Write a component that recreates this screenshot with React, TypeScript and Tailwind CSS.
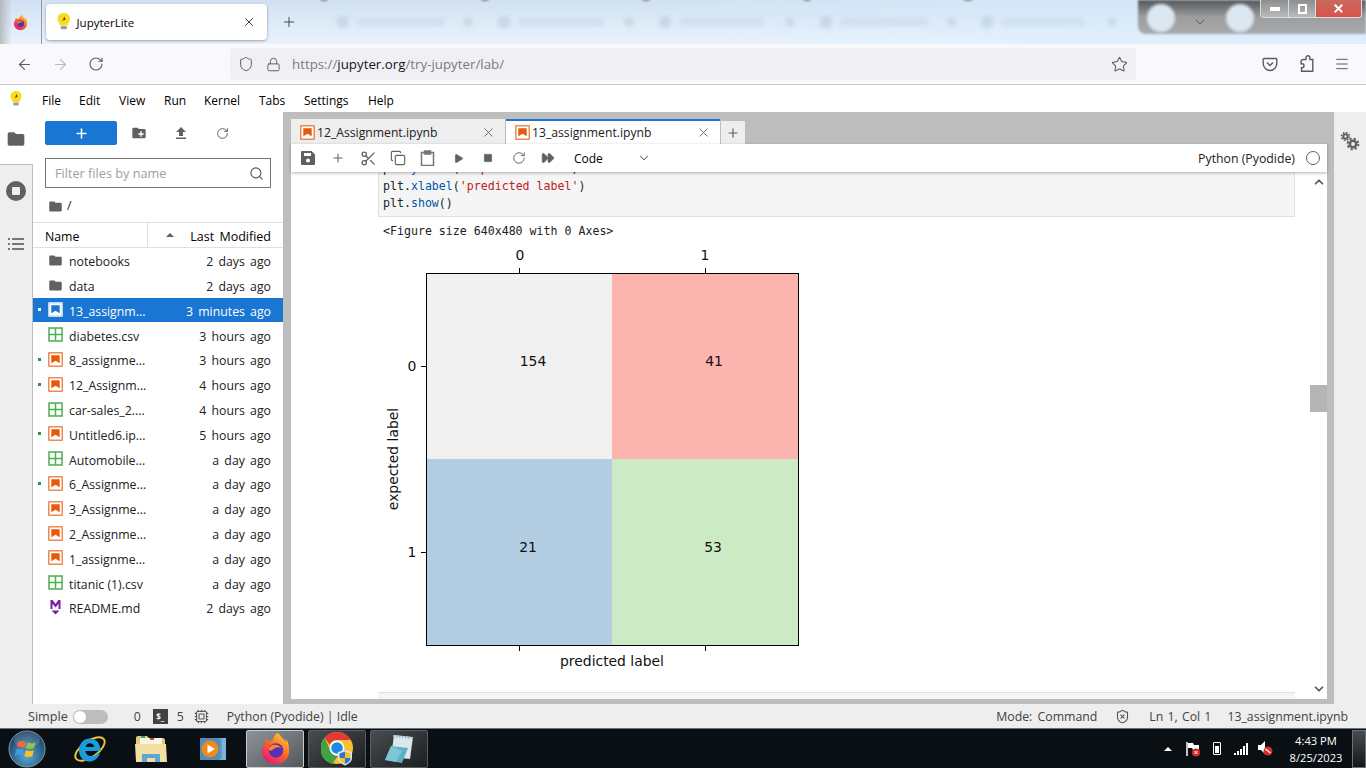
import type { ReactNode } from "react";
import { ChevronDown, ChevronUp, Copy, FastForward, Menu, Play, Plus, RotateCw, Scissors, Search, Square, Star, X, ArrowLeft, ArrowRight, Lock, Shield, Cpu, ShieldX } from "lucide-react";

const UI = "font-['Open_Sans','Noto_Sans',sans-serif]";

type FileRow = { name: string; when: string; kind: "folder" | "nb" | "csv" | "md"; running?: boolean; selected?: boolean };

const files: FileRow[] = [
  { name: "notebooks", when: "2 days ago", kind: "folder" },
  { name: "data", when: "2 days ago", kind: "folder" },
  { name: "13_assignm...", when: "3 minutes ago", kind: "nb", running: true, selected: true },
  { name: "diabetes.csv", when: "3 hours ago", kind: "csv" },
  { name: "8_assignme...", when: "3 hours ago", kind: "nb", running: true },
  { name: "12_Assignm...", when: "4 hours ago", kind: "nb", running: true },
  { name: "car-sales_2....", when: "4 hours ago", kind: "csv" },
  { name: "Untitled6.ip...", when: "5 hours ago", kind: "nb", running: true },
  { name: "Automobile...", when: "a day ago", kind: "csv" },
  { name: "6_Assignme...", when: "a day ago", kind: "nb", running: true },
  { name: "3_Assignme...", when: "a day ago", kind: "nb" },
  { name: "2_Assignme...", when: "a day ago", kind: "nb" },
  { name: "1_assignme...", when: "a day ago", kind: "nb" },
  { name: "titanic (1).csv", when: "a day ago", kind: "csv" },
  { name: "README.md", when: "2 days ago", kind: "md" },
];

function FolderIcon({ size = 16, color = "#616161" }: { size?: number; color?: string }) {
  return (
    <svg width={size} height={size} viewBox="0 0 24 24" fill={color}>
      <path d="M10 4H4c-1.100 0-2 .9-2 2v12c0 1.100.9 2 2 2h16c1.100 0 2-.9 2-2V8c0-1.100-.9-2-2-2h-8l-2-2z" />
    </svg>
  );
}

function NotebookIcon({ color = "#e8590c", selected }: { color?: string; selected?: boolean }) {
  return (
    <svg width="15" height="15" viewBox="0 0 15 15" className="shrink-0">
      <rect x="0.750" y="0.750" width="13.500" height="13.500" rx="0.500" fill="white" stroke={selected ? "#bcd8f4" : color} strokeOpacity={selected ? 1 : 0.7} strokeWidth="1.500" />
      <path d="M3.300 3.300h8.400v8l-4.200-2.600-4.200 2.600z" fill={color} />
    </svg>
  );
}

function CsvIcon() {
  return (
    <svg width="15" height="15" viewBox="0 0 15 15" className="shrink-0" fill="none" stroke="#4caf50" strokeWidth="1.500">
      <rect x="1" y="1" width="13" height="13" />
      <path d="M7.500 1v13M1 7.500h13" />
    </svg>
  );
}

function MarkdownIcon() {
  return (
    <svg width="15" height="16" viewBox="0 0 15 16" className="shrink-0" fill="#7b1fa2">
      <path d="M2.500 0h2.200l2.800 4 2.800-4h2.200v9h-2V3.700L7.500 7.500 4.500 3.700V9h-2z" />
      <path d="M3.500 10.500h8L7.500 14.500z" />
    </svg>
  );
}

function Bulb({ size = 16 }: { size?: number }) {
  return (
    <svg width={size * 0.75} height={size} viewBox="0 0 12 16">
      <path d="M6 0C2.700 0 .5 2.300.5 5.200c0 2.400 1.700 3.500 2.300 6h6.400c.6-2.500 2.300-3.600 2.300-6C11.500 2.300 9.300 0 6 0z" fill="#f5dc1e" />
      <rect x="3.200" y="11.500" width="5.600" height="3" rx="1" fill="#9e9e9e" />
      <path d="M4.500 8l2-5 1 3-2 .5z" fill="#4a3d10" />
    </svg>
  );
}

function FirefoxLogo({ size = 18, id }: { size?: number; id: string }) {
  return (
    <svg width={size} height={size} viewBox="0 0 32 32">
      <defs>
        <linearGradient id={id} x1="0.800" y1="0.100" x2="0.200" y2="1">
          <stop offset="0" stopColor="#ffc229" />
          <stop offset="0.500" stopColor="#ff5a2b" />
          <stop offset="1" stopColor="#e31587" />
        </linearGradient>
      </defs>
      <path d="M29 10c-.7-1.700-2.300-3.600-3.500-4.200 1 2 1.500 3.500 1.700 4.800C25 6 21.500 4 18.500 0c-.2 0-.3 0-.4.100-3.800 2.200-4.800 5.800-4.900 7.400-1.500.1-3 .7-4 1.700-.9-.7-1-1.300-1.500-3.400-1.400 1-2.500 3-3 5C3 14 2 17 2 19c0 7 6 13 14 13s14-6 14-13c0-3-.2-6-1-9z" fill={`url(#${id})`} />
      <circle cx="16.500" cy="18" r="7.500" fill="#5b2fb5" />
      <path d="M9 17c1-3 3-5 6-5 4 0 6 2 7 4-1.500-1-3-1.500-5-1-2.500.5-3 2-5 3-1.500.5-2.500 0-3-1z" fill="#ff8a1f" />
    </svg>
  );
}

function ChromeLogo() {
  return (
    <svg width="34" height="34" viewBox="0 0 34 34" className="ml-[2px]">
      <circle cx="16" cy="16" r="16" fill="#fbc02d" />
      <path d="M16 0a16 16 0 0 1 13.860 8H16a8 8 0 0 0-7.300 4.700L3.500 5.600A16 16 0 0 1 16 0z" fill="#e53935" />
      <path d="M3.500 5.600l6.600 14.600a8 8 0 0 0 6.900 3.700L11 32A16 16 0 0 1 3.500 5.600z" fill="#43a047" />
      <circle cx="16" cy="16" r="7.500" fill="white" />
      <circle cx="16" cy="16" r="5.800" fill="#1e88e5" />
      <path d="M24 18l7 2v6c0 3.500-3.500 6-7 7.500-3.500-1.500-7-4-7-7.500v-6z" fill="#dfe7ee" />
      <path d="M24 19.500V26h-5.500v-4.500zM24 26h5.500c0 3-3 5-5.500 6z" fill="#2f74c9" />
      <path d="M24 19.500l5.500 2V26H24zM18.500 26H24v6c-2.500-1-5.500-3-5.500-6z" fill="#f2c22e" />
    </svg>
  );
}

function StartOrb() {
  return (
    <svg width="38" height="38" viewBox="0 0 38 38">
      <defs>
        <radialGradient id="orb" cx="0.500" cy="0.700" r="0.700">
          <stop offset="0" stopColor="#5aa8d8" />
          <stop offset="1" stopColor="#12385c" />
        </radialGradient>
      </defs>
      <circle cx="19" cy="19" r="18" fill="url(#orb)" stroke="#8a9aa8" strokeWidth="1" />
      <path d="M10 12c3-1.500 5-1 8 .2l-1.500 6c-3-1-5-1.200-8-.2z" fill="#e2552b" />
      <path d="M19.500 12.600c3 1 5 1.300 8-.1l-1.500 6c-3 1.300-5 1-8 0z" fill="#7fba3a" />
      <path d="M8.200 19.500c3-1 5-.8 8 .2l-1.500 6c-3-1-5-1.200-8 .2z" fill="#3d9ae0" />
      <path d="M17.800 20.200c3 1 5 1.300 8 0l-1.500 6c-3 1.200-5 1-8-.1z" fill="#f7c325" />
      <ellipse cx="19" cy="10" rx="13" ry="8" fill="white" fillOpacity="0.150" />
    </svg>
  );
}

function IeLogo() {
  return (
    <svg width="34" height="34" viewBox="0 0 34 34" fill="none">
      <ellipse cx="17" cy="17" rx="17" ry="8" transform="rotate(-35 17 17)" stroke="#f2c22e" strokeWidth="2" />
      <path d="M6 18.500C6 11 11 6.500 17 6.500c6.500 0 10.500 5 10.500 12.500H12.500c0 5 8 7.500 11.500 2.500h3c-2.500 6.500-8 8-11 8-5.500 0-10-4.500-10-11zm6.800-3.500H21c0-5-8-5-8.200 0z" fill="#1a9bdc" />
    </svg>
  );
}

function ExplorerLogo() {
  return (
    <svg width="32" height="30" viewBox="0 0 32 30">
      <path d="M1 4c0-1 .8-2 2-2h9l2 2h14c1 0 2 1 2 2v21H1z" fill="#e3c77a" />
      <rect x="5" y="4" width="22" height="10" fill="#f8f4e6" />
      <rect x="6" y="2" width="4" height="2" fill="#3aa655" />
      <rect x="15" y="4" width="4" height="2" fill="#d84a35" />
      <path d="M0 10h31l1 18H1z" fill="#f3dfa2" />
      <path d="M7 28v-8h18v8h-5v-4h-8v4z" fill="#5ea6d6" />
    </svg>
  );
}

function MediaLogo() {
  return (
    <svg width="26" height="26" viewBox="0 0 26 26">
      <rect x="4" y="2" width="22" height="22" fill="#7fb2d4" />
      <rect x="2" y="3" width="20" height="20" fill="#5a9bc8" />
      <rect x="0" y="2" width="20" height="22" fill="#4f8fba" />
      <circle cx="10" cy="13" r="8.500" fill="#f08a1d" />
      <path d="M7.500 8.500l7.500 4.500-7.500 4.500z" fill="white" />
    </svg>
  );
}

function NotepadLogo() {
  return (
    <svg width="32" height="30" viewBox="0 0 32 30">
      <path d="M11 1l19 2-3 22-19-2z" fill="#d8e8ec" />
      <path d="M10 2l19 2" stroke="#9fb0b5" strokeWidth="2" strokeDasharray="1.500 1.500" />
      <path d="M8 12L2 26l17 3 6-15z" fill="#5db0c4" />
      <path d="M8 12l11 5-6 11-11-2z" fill="#8fd0dc" fillOpacity="0.700" />
    </svg>
  );
}

function BlurredTab({ text }: { text: number }) {
  return (
    <div className="relative flex h-9 w-[161px] shrink-0 items-center gap-2 pl-[14px] pr-[12px]">
      <div className="absolute -top-[8px] -left-[3px] h-[5px] w-[8px] rounded-full bg-[#8a8e92] blur-[1px]" />
      <div className="h-3 w-3 rounded-sm bg-[#a9bccb] opacity-40 blur-[2px]" />
      <div className="h-[8px] rounded-sm bg-[#b4c7d8] opacity-30 blur-[2px]" style={{ width: text }} />
      <div className="ml-auto h-2 w-2 bg-[#a9bccb] opacity-40 blur-[2px]" />
    </div>
  );
}

function TabStrip() {
  return (
    <div className="relative flex h-11 shrink-0 items-center overflow-hidden bg-gradient-to-b from-[#d0e1f2] to-[#eaf3fd]">
      <div className="absolute top-0 bottom-0 left-0 w-[12px] bg-gradient-to-r from-[#9c9c9c] to-transparent opacity-60" />
      <div className="absolute top-0 bottom-0 right-0 left-[600px] bg-gradient-to-r from-transparent to-[#d9ecff]/70" />

      <div className="relative flex w-[42px] shrink-0 items-center justify-center self-stretch border-r border-[#8e9aa6]">
        <FirefoxLogo size={15} id="ffs" />
      </div>
      <div className="relative ml-[4px] flex h-9 w-[221px] shrink-0 items-center rounded-[4px] bg-white pl-[11px] pr-[11px] shadow-[0_1px_3px_rgba(0,0,0,.35)]">
        <Bulb size={18} />
        <span className={`ml-[6px] pt-[2px] text-[11.500px] text-black ${UI}`}>JupyterLite</span>
        <X size={14} strokeWidth={1.500} className="ml-auto text-[#222]" />
      </div>
      <Plus size={16} strokeWidth={1.300} className="relative ml-[14px] shrink-0 text-[#333]" />
      <div className="relative ml-[26px] flex">
        <BlurredTab text={88} />
        <BlurredTab text={86} />
        <BlurredTab text={86} />
        <BlurredTab text={88} />
        <BlurredTab text={84} />
      </div>

      <div className="absolute top-0 right-0 bottom-[10px] left-[1138px] rounded-bl-lg bg-gradient-to-b from-[#55575a] via-[#9c9ea0] to-[#a8aaac] blur-[1px]" />
      <div className="absolute top-[4px] left-[1147px] h-7 w-7 rounded-full bg-[#dbe7f1] blur-[1.500px]" />
      <div className="absolute top-[4px] left-[1226px] h-7 w-7 rounded-full bg-[#dbe7f1] blur-[1.500px]" />
      <ChevronDown size={16} strokeWidth={1.200} className="absolute top-[14px] left-[1192px] text-[#444]" />

      {/* window controls */}
      <div className="absolute top-0 right-[4px] flex h-[18px] w-[102px] overflow-hidden rounded-b-[4px] border border-t-0 border-[#d8dee4]">
        <div className="flex w-[28px] items-center justify-center border-r border-[#d8dee4] bg-gradient-to-b from-[#8c8e90] to-[#b8babc]">
          <div className="h-[4px] w-[10px] bg-white" />
        </div>
        <div className="flex w-[27px] items-center justify-center border-r border-[#d8dee4] bg-gradient-to-b from-[#8c8e90] to-[#b8babc]">
          <div className="h-[10px] w-[9px] border-2 border-white" />
        </div>
        <div className="flex flex-1 items-center justify-center bg-gradient-to-b from-[#c8685c] to-[#d9534a]">
          <X size={13} strokeWidth={3.500} className="text-white" />
        </div>
      </div>
    </div>
  );
}

function NavBar() {
  return (
    <div className="flex h-[41px] shrink-0 items-center border-b border-[#c9c9c9] bg-[#f9f9fb] text-[#5b5b66]">
      <ArrowLeft size={17} strokeWidth={1.600} className="ml-[16px]" />
      <ArrowRight size={17} strokeWidth={1.600} className="ml-[19px] text-[#b9b9c0]" />
      <RotateCw size={16} strokeWidth={1.600} className="ml-[19px]" />
      <div className="ml-[126px] flex h-8 w-[906px] items-center rounded-[4px] bg-[#f0f0f4]">
        <Shield size={16} strokeWidth={1.500} className="ml-[8px]" />
        <Lock size={15} strokeWidth={1.500} className="ml-[12px]" />
        <span className={`ml-[11px] pt-[2px] text-[13.300px] text-[#7a7a80] ${UI}`}>
          https://<span className="text-[#15141a]">jupyter.org</span>/try-jupyter/lab/
        </span>
        <Star size={17} strokeWidth={1.500} className="ml-auto mr-[8px]" />
      </div>
      <svg width="16" height="16" viewBox="0 0 16 16" fill="none" stroke="currentColor" strokeWidth="1.400" className="ml-[126px]">
        <path d="M2 2.500h12c.5 0 .8.400.8.800v4.200C14.800 11.500 11.500 14.500 8 14.500S1.200 11.500 1.200 7.500V3.300c0-.4.300-.8.800-.8z" />
        <path d="M5 6.500l3 3 3-3" />
      </svg>
      <svg width="16" height="18" viewBox="0 0 16 18" fill="none" stroke="currentColor" strokeWidth="1.400" className="ml-[20px]">
        <path d="M5.500 4.500H8V2.600a1.900 1.900 0 0 1 3.800 0v1.900h3v11.800H3.500v-3.600H4a2 2 0 0 0 0-4h-.9V6.500c0-1 1.200-2 2.400-2z" />
      </svg>
      <Menu size={16} strokeWidth={1.500} className="ml-[20px]" />
    </div>
  );
}

function MenuBar() {
  const items = [
    ["File", "w-[37px]"],
    ["Edit", "w-[40px]"],
    ["View", "w-[45px]"],
    ["Run", "w-[40px]"],
    ["Kernel", "w-[55px]"],
    ["Tabs", "w-[45px]"],
    ["Settings", "w-[64px]"],
    ["Help", "w-[40px]"],
  ];
  return (
    <div className={`flex h-[27px] shrink-0 items-center bg-white text-[12px] text-black ${UI}`}>
      <div className="ml-[10px] mr-[20px] flex w-[12px] justify-center">
        <Bulb size={16} />
      </div>
      {items.map(([label, w]) => (
        <span key={label} className={`${w} pt-[4px]`}>
          {label}
        </span>
      ))}
    </div>
  );
}

function ActivityBar() {
  return (
    <div className="flex w-[33px] shrink-0 flex-col items-center border-r border-[#bdbdbd] bg-[#eeeeee]">
      <div className="-mr-px flex h-[53px] w-[33px] items-center justify-center border-b border-[#bdbdbd] bg-white pt-[2px] pr-[1px]">
        <FolderIcon size={20} />
      </div>
      <div className="mt-[16px] flex h-5 w-5 items-center justify-center rounded-full bg-[#616161]">
        <div className="h-2 w-2 rounded-[1px] bg-[#eeeeee]" />
      </div>
      <svg width="16" height="12" viewBox="0 0 16 12" fill="#757575" className="mt-[37px]">
        <rect x="0" y="0" width="2" height="2" />
        <rect x="4" y="0" width="12" height="2" />
        <rect x="0" y="5" width="2" height="2" />
        <rect x="4" y="5" width="12" height="2" />
        <rect x="0" y="10" width="2" height="2" />
        <rect x="4" y="10" width="12" height="2" />
      </svg>
    </div>
  );
}

function FilePanel() {
  return (
    <div className={`flex w-[250px] shrink-0 flex-col bg-white text-[12.300px] text-[#212121] ${UI}`}>
      <div className="mt-[9px] flex items-center pl-[12px] text-[#616161]">
        <div className="flex h-6 w-[72px] items-center justify-center rounded-[2px] bg-[#1976d2]">
          <Plus size={15} strokeWidth={2.500} className="text-white" />
        </div>
        <svg width="16" height="16" viewBox="0 0 24 24" className="ml-[14px]">
          <path d="M10 4H4c-1.100 0-2 .9-2 2v12c0 1.100.9 2 2 2h16c1.100 0 2-.9 2-2V8c0-1.100-.9-2-2-2h-8l-2-2z" fill="#616161" />
          <path d="M14 9.500v3h-3v2h3v3h2v-3h3v-2h-3v-3z" fill="white" />
        </svg>
        <svg width="14" height="14" viewBox="0 0 14 14" fill="#616161" className="ml-[27px]">
          <path d="M7 1l5 5H9v4H5V6H2z" />
          <rect x="2" y="11.500" width="10" height="1.500" />
        </svg>
        <RotateCw size={13} strokeWidth={1.800} className="ml-[28px]" />
      </div>
      <div className="mx-[12px] mt-[13px] flex h-[30px] w-[226px] items-center justify-between border border-[#757575] pl-[9px] pr-[6px]">
        <span className="pt-[2px] text-[12.700px] text-[#9e9e9e]">Filter files by name</span>
        <Search size={15} strokeWidth={1.800} className="text-[#555]" />
      </div>
      <div className="mt-[10px] flex h-[17px] items-center pl-[15px]">
        <FolderIcon size={15} />
        <span className="ml-[4px]">/</span>
      </div>
      <div className="mt-[7px] flex h-[26px] items-center border-y border-[#e0e0e0]">
        <span className="w-[114px] pl-[12px] pt-[4px] text-black">Name</span>
        <div className="flex h-full flex-1 items-center justify-between border-l border-[#e0e0e0] pl-[18px] pr-[12px]">
          <div className="h-0 w-0 border-x-[4px] border-b-[4px] border-x-transparent border-b-[#616161]" />
          <span className="pt-[4px] text-[12.500px] text-black [word-spacing:2px]">Last Modified</span>
        </div>
      </div>
      <div className="flex flex-col">
        {files.map((f) => (
          <div key={f.name} className={`flex h-[24.800px] items-center pr-[12px] ${f.selected ? "bg-[#1976d2] text-white" : ""}`}>
            <div className="flex w-[15px] shrink-0 pl-[5px]">
              {f.running && <div className={`h-[3px] w-[3px] shrink-0 ${f.selected ? "bg-white" : "bg-[#388e3c]"}`} />}
            </div>
            <div className="flex w-[21px] shrink-0 items-center">
              {f.kind === "folder" && <FolderIcon size={15} />}
              {f.kind === "nb" && <NotebookIcon color={f.selected ? "#1976d2" : undefined} selected={f.selected} />}
              {f.kind === "csv" && <CsvIcon />}
              {f.kind === "md" && <MarkdownIcon />}
            </div>
            <span className="whitespace-nowrap pt-[4px]">{f.name}</span>
            <span className="ml-auto whitespace-nowrap pt-[4px] [word-spacing:2px]">{f.when}</span>
          </div>
        ))}
      </div>
    </div>
  );
}

function NotebookTab({ title, active }: { title: string; active?: boolean }) {
  return (
    <div className={`flex h-[25px] w-[214px] shrink-0 items-center border-t-2 pl-[9px] pr-[9px] ${active ? "border-[#1976d2] bg-white" : "border-transparent bg-[#eeeeee]"}`}>
      <NotebookIcon />
      <span className={`ml-[2px] pt-[2px] text-[12.200px] text-[#212121] ${UI}`}>{title}</span>
      <X size={15} strokeWidth={1.300} className="ml-auto text-[#555]" />
    </div>
  );
}

function Toolbar() {
  return (
    <div className={`relative z-10 flex h-[28px] shrink-0 items-center bg-white text-[#616161] shadow-[0_1px_3px_rgba(0,0,0,.3)] ${UI}`}>
      <svg width="14" height="14" viewBox="0 0 14 14" fill="#616161" className="ml-[10px]">
        <path d="M1 0h9.500L14 3.500V13a1 1 0 0 1-1 1H1a1 1 0 0 1-1-1V1a1 1 0 0 1 1-1zM3 2v3h7V2z" />
        <circle cx="7" cy="9.500" r="2" fill="white" />
      </svg>
      <Plus size={14} strokeWidth={1.800} className="ml-[16px]" />
      <Scissors size={17} strokeWidth={1.800} className="ml-[15px]" />
      <Copy size={16} strokeWidth={1.700} className="ml-[13px]" />
      <svg width="15" height="16" viewBox="0 0 15 16" fill="none" stroke="#757575" strokeWidth="1.500" className="ml-[14px]">
        <rect x="1.500" y="2.500" width="12" height="13" />
        <rect x="4.500" y="1" width="6" height="3" fill="#757575" />
      </svg>
      <Play size={11} fill="#616161" strokeWidth={1} className="ml-[18px]" />
      <Square size={10} fill="#616161" strokeWidth={1} className="ml-[19px]" />
      <RotateCw size={14} strokeWidth={1.600} className="ml-[19px]" />
      <FastForward size={14} fill="#616161" strokeWidth={1} className="ml-[15px]" />
      <span className="ml-[19px] pt-[2px] text-[12px] text-black">Code</span>
      <ChevronDown size={14} strokeWidth={1.800} className="ml-[34px]" />
      <span className="ml-auto pt-[2px] text-[12.300px] text-[#212121]">Python (Pyodide)</span>
      <div className="ml-[11px] mr-[7px] h-[14px] w-[14px] rounded-full border-[1.500px] border-[#616161]" />
    </div>
  );
}

function ConfusionChart() {
  const text = { fontFamily: "'DejaVu Sans', sans-serif", fontSize: 13.900, fill: "#111" };
  return (
    <svg width="440" height="432" viewBox="0 0 440 432" className="block shrink-0">
      {/* origin is page (380, 240) */}
      <g transform="translate(-380,-240)">
        <rect x="426.500" y="273.500" width="186" height="186" fill="#f0f0f0" />
        <rect x="612" y="273.500" width="186" height="186" fill="#fbb4ae" />
        <rect x="426.500" y="459" width="186" height="186" fill="#b3cde3" />
        <rect x="612" y="459" width="186" height="186" fill="#ccebc5" />
        <rect x="426.500" y="273.500" width="372" height="372" fill="none" stroke="#000" strokeWidth="1" />
        <path d="M519.500 268v5M705.500 268v5M519.500 646v5M705.500 646v5M421 366.500h5M421 552.500h5" stroke="#000" strokeWidth="1" />
        <text x="520" y="260" textAnchor="middle" {...text}>0</text>
        <text x="705" y="260" textAnchor="middle" {...text}>1</text>
        <text x="412" y="371" textAnchor="middle" {...text}>0</text>
        <text x="412" y="557" textAnchor="middle" {...text}>1</text>
        <text x="533" y="366" textAnchor="middle" {...text}>154</text>
        <text x="714" y="366" textAnchor="middle" {...text}>41</text>
        <text x="528" y="552" textAnchor="middle" {...text}>21</text>
        <text x="713" y="552" textAnchor="middle" {...text}>53</text>
        <text x="612" y="666" textAnchor="middle" {...text}>predicted label</text>
        <text transform="translate(398,459) rotate(-90)" textAnchor="middle" {...text}>expected label</text>
      </g>
    </svg>
  );
}

function NotebookContent() {
  const mono = "font-['DejaVu_Sans_Mono',monospace] text-[11.600px] leading-[17px]";
  return (
    <div className="relative flex min-h-0 flex-1 overflow-hidden bg-white">
      <div className="min-w-0 flex-1 overflow-hidden pl-[87px]">
        <div className={`-mt-[12px] w-[917px] border border-t-0 border-[#e0e0e0] bg-[#f5f5f5] pb-[4px] pl-[4px] text-[#212121] ${mono}`}>
          <div className="h-[18px]">
            plt.<span className="text-[#0055aa]">ylabel</span>(<span className="text-[#ba2121]">'expected label'</span>)
          </div>
          <div>
            plt.<span className="text-[#0055aa]">xlabel</span>(<span className="text-[#ba2121]">'predicted label'</span>)
          </div>
          <div>
            plt.<span className="text-[#0055aa]">show</span>()
          </div>
        </div>
        <div className={`mt-[6px] pl-[5px] text-[#212121] ${mono}`}>{"<Figure size 640x480 with 0 Axes>"}</div>
        <div className="ml-[2px]">
          <ConfusionChart />
        </div>
        <div className="mt-[20px] h-[10px] w-[917px] border-t border-[#e0e0e0] bg-[#f5f5f5]" />
      </div>
      <div className="flex w-[17px] shrink-0 flex-col items-center justify-between bg-white py-[3px] text-[#555]">
        <ChevronUp size={14} strokeWidth={3} />
        <ChevronDown size={14} strokeWidth={3} />
      </div>
      <div className="absolute right-0 top-[213px] h-[27px] w-[17px] bg-[#b5b5b5]" />
    </div>
  );
}

function MainArea() {
  return (
    <div className="flex min-w-0 flex-1 flex-col pb-[5px] pt-[7px]">
      <div className="flex h-[25px] shrink-0 items-end gap-px">
        <NotebookTab title="12_Assignment.ipynb" />
        <NotebookTab title="13_assignment.ipynb" active />
        <div className="flex h-[23px] w-[24px] items-center justify-center bg-[#eeeeee] text-[#616161]">
          <Plus size={14} strokeWidth={2} />
        </div>
      </div>
      <Toolbar />
      <NotebookContent />
    </div>
  );
}

function StatusBar() {
  return (
    <div className={`flex h-6 shrink-0 items-center bg-[#eeeeee] pt-[1px] text-[12.300px] text-[#424242] ${UI}`}>
      <span className="ml-[28px] pt-[1px] text-[12.600px]">Simple</span>
      <div className="ml-[5px] flex h-[14px] w-[35px] items-center rounded-full bg-[#bdbdbd] pl-px">
        <div className="h-3 w-3 rounded-full bg-white" />
      </div>
      <span className="ml-[26px] pt-[1px]">0</span>
      <div className="ml-[12px] flex h-[15px] w-[15px] items-center justify-center bg-[#424242] text-[8px] font-bold text-white">$_</div>
      <span className="ml-[9px] pt-[1px]">5</span>
      <Cpu size={15} strokeWidth={1.800} className="ml-[10px] text-[#555]" />
      <span className="ml-[18px] pt-[1px]">Python (Pyodide) | Idle</span>
      <span className="ml-auto pt-[1px] [word-spacing:2px]">Mode: Command</span>
      <ShieldX size={15} strokeWidth={1.800} className="ml-[18px] text-[#555]" />
      <span className="ml-[19px] pt-[1px] [word-spacing:1px]">Ln 1, Col 1</span>
      <span className="ml-[16px] mr-[18px] pt-[1px]">13_assignment.ipynb</span>
    </div>
  );
}

function TaskButton({ active, children }: { active?: boolean; children: ReactNode }) {
  return (
    <div className={`flex h-[38px] w-[58px] items-center justify-center rounded-[2px] border ${active ? "border-[#c8ccd0] bg-gradient-to-br from-[#8f9296] to-[#55585c]" : "border-[#5a5e62] bg-gradient-to-br from-[#4a4d50] to-[#1c1f22]"}`}>
      {children}
    </div>
  );
}

function Taskbar() {
  return (
    <div className={`flex h-10 shrink-0 items-center border-t border-[#6d7278] bg-[#0a0f14] text-white ${UI}`}>
      <div className="ml-[8px] w-[38px]">
        <StartOrb />
      </div>
      <div className="ml-[27px] w-[34px]">
        <IeLogo />
      </div>
      <div className="ml-[28px] w-[32px]">
        <ExplorerLogo />
      </div>
      <div className="ml-[33px] w-[26px]">
        <MediaLogo />
      </div>
      <div className="ml-[20px] flex gap-[4px]">
        <TaskButton active>
          <FirefoxLogo size={31} id="fft" />
        </TaskButton>
        <TaskButton>
          <ChromeLogo />
        </TaskButton>
        <TaskButton>
          <NotepadLogo />
        </TaskButton>
      </div>
      <div className="ml-auto flex items-center">
        <div className="h-0 w-0 border-x-[4px] border-b-[4px] border-x-transparent border-b-white" />
        <svg width="16" height="16" viewBox="0 0 16 16" className="ml-[13px]">
          <path d="M2 1v14" stroke="white" strokeWidth="1.500" />
          <path d="M3 2h5l1 2h5v5H8L7 7H3z" fill="white" />
          <circle cx="11" cy="11.500" r="4" fill="#d92a2a" />
          <path d="M9.500 10l3 3M12.500 10l-3 3" stroke="white" strokeWidth="1" />
        </svg>
        <div className="relative ml-[12px] flex h-[13px] w-[8px] items-end rounded-[1px] border border-white p-px">
          <div className="h-[7px] w-full bg-white" />
        </div>
        <svg width="16" height="12" viewBox="0 0 16 12" fill="white" className="ml-[12px]">
          <rect x="1" y="10" width="2" height="2" />
          <rect x="4" y="8" width="2" height="4" />
          <rect x="7" y="6" width="2" height="6" />
          <rect x="10" y="3" width="2" height="9" />
          <rect x="13" y="0" width="2" height="12" />
        </svg>
        <svg width="16" height="15" viewBox="0 0 16 15" className="ml-[8px]">
          <path d="M1 4h3l4-4v13l-4-4H1z" fill="white" />
          <circle cx="11" cy="10" r="4.500" fill="#d92a2a" />
          <path d="M8.500 8l5 4" stroke="white" strokeWidth="1.500" />
        </svg>
      </div>
      <div className="ml-[10px] flex w-[66px] flex-col items-center pt-[1px] text-[11.200px] leading-[17px]">
        <span>4:43 PM</span>
        <span>8/25/2023</span>
      </div>
      <div className="ml-[3px] h-[38px] w-[14px] border border-[#6d7278] bg-gradient-to-b from-[#4a4d50] to-[#15181b]" />
    </div>
  );
}

export default function App() {
  return (
    <div className="flex h-[768px] w-[1366px] flex-col overflow-hidden bg-white">
      <TabStrip />
      <NavBar />
      <MenuBar />
      <div className="flex min-h-0 flex-1 bg-[#bdbdbd]">
        <ActivityBar />
        <FilePanel />
        <div className="w-[8px] shrink-0" />
        <MainArea />
        <div className="ml-[7px] flex w-[32px] shrink-0 justify-center bg-[#eeeeee] pt-[19px]">
          <svg width="20" height="20" viewBox="0 0 20 20" fill="none" stroke="#616161">
            <circle cx="5.500" cy="5.500" r="2.200" strokeWidth="2" />
            <circle cx="5.500" cy="5.500" r="4" strokeWidth="1.600" strokeDasharray="1.600 1.540" />
            <circle cx="13" cy="13" r="3.200" strokeWidth="2.600" />
            <circle cx="13" cy="13" r="5.400" strokeWidth="2" strokeDasharray="2.200 2.040" />
          </svg>
        </div>
      </div>
      <StatusBar />
      <Taskbar />
    </div>
  );
}
